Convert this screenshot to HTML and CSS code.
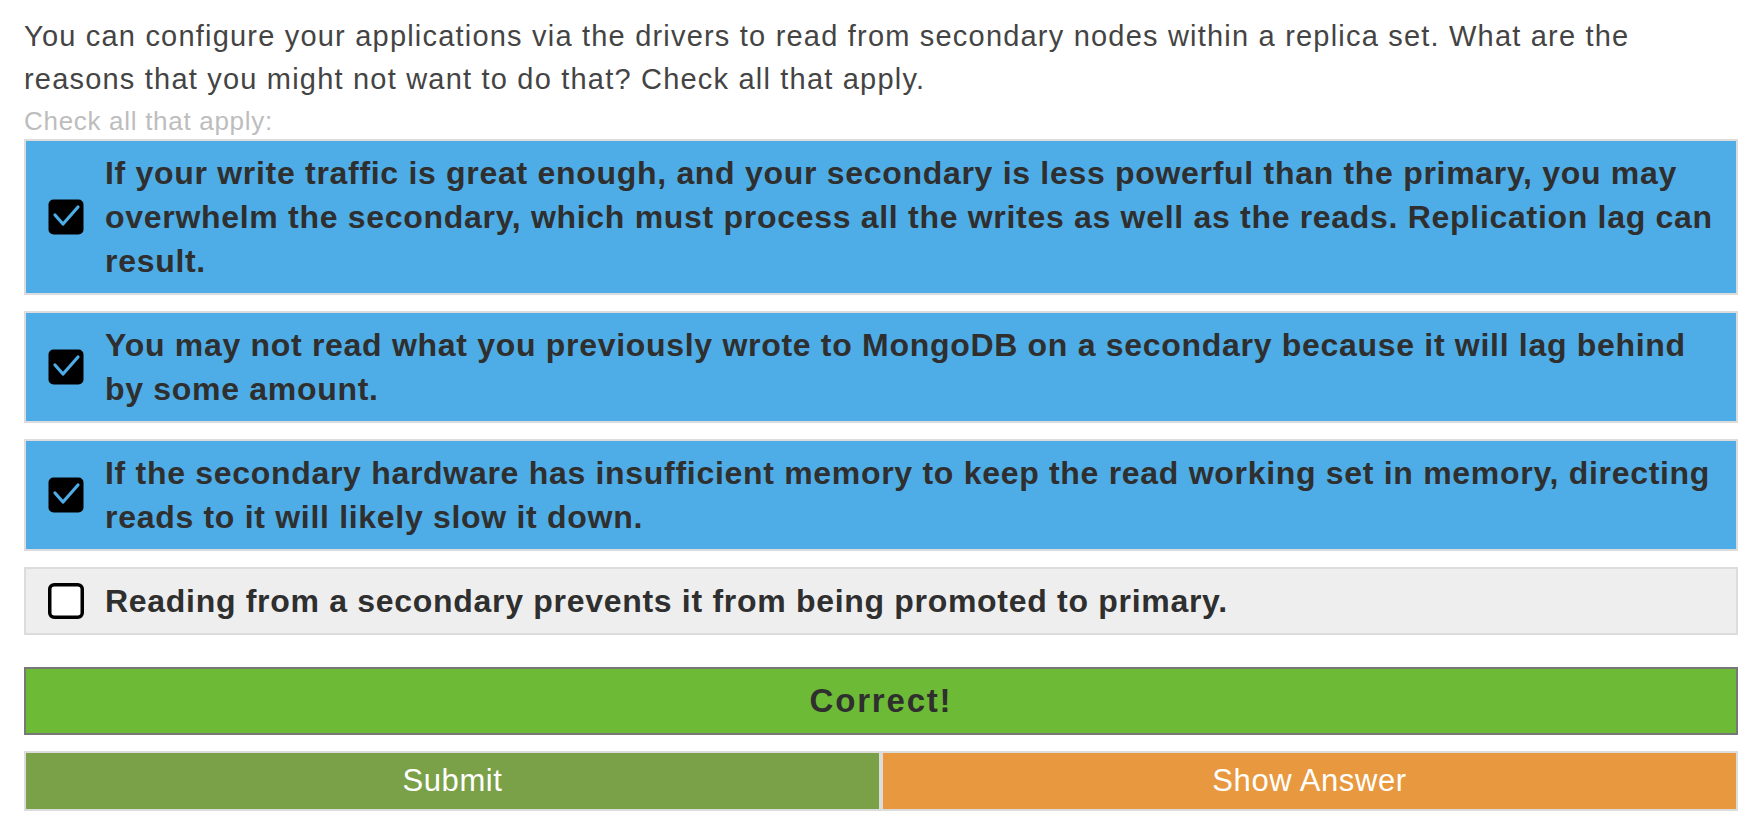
FILE: index.html
```html
<!DOCTYPE html>
<html>
<head>
<meta charset="utf-8">
<link rel="stylesheet" href="styles.css">
</head>
<body>
<div class="quiz">
  <p class="question">You can configure your applications via the drivers to read from secondary nodes within a replica set. What are the reasons that you might not want to do that? Check all that apply.</p>
  <div class="hint">Check all that apply:</div>
  <div class="options">
    <label class="option checked">
      <span class="box"><svg viewBox="0 0 36 36" width="36" height="36"><rect x="0.5" y="0.5" width="35" height="35" rx="5" fill="#000"/><polyline points="7,16 15,25 30,8" fill="none" stroke="#4eade6" stroke-width="3.2" stroke-linecap="round" stroke-linejoin="round"/></svg></span>
      <span class="text">If your write traffic is great enough, and your secondary is less powerful than the primary, you may overwhelm the secondary, which must process all the writes as well as the reads. Replication lag can result.</span>
    </label>
    <label class="option checked">
      <span class="box"><svg viewBox="0 0 36 36" width="36" height="36"><rect x="0.5" y="0.5" width="35" height="35" rx="5" fill="#000"/><polyline points="7,16 15,25 30,8" fill="none" stroke="#4eade6" stroke-width="3.2" stroke-linecap="round" stroke-linejoin="round"/></svg></span>
      <span class="text">You may not read what you previously wrote to MongoDB on a secondary because it will lag behind by some amount.</span>
    </label>
    <label class="option checked">
      <span class="box"><svg viewBox="0 0 36 36" width="36" height="36"><rect x="0.5" y="0.5" width="35" height="35" rx="5" fill="#000"/><polyline points="7,16 15,25 30,8" fill="none" stroke="#4eade6" stroke-width="3.2" stroke-linecap="round" stroke-linejoin="round"/></svg></span>
      <span class="text">If the secondary hardware has insufficient memory to keep the read working set in memory, directing reads to it will likely slow it down.</span>
    </label>
    <label class="option unchecked">
      <span class="box"><svg viewBox="0 0 36 36" width="36" height="36"><rect x="1.75" y="1.75" width="32.5" height="32.5" rx="4.5" fill="#fff" stroke="#000" stroke-width="3.5"/></svg></span>
      <span class="text">Reading from a secondary prevents it from being promoted to primary.</span>
    </label>
  </div>
  <div class="result">Correct!</div>
  <div class="actions">
    <button class="btn submit">Submit</button>
    <button class="btn answer">Show Answer</button>
  </div>
</div>
</body>
</html>
```
FILE: styles.css
```css
html, body {
  margin: 0;
  padding: 0;
  background: #fff;
}
.quiz {
  padding: 15px 16px 0 24px;
  font-family: "Liberation Sans", Arial, sans-serif;
  color: #333;
}
.question {
  margin: 0;
  font-size: 29px;
  letter-spacing: 1.2px;
  line-height: 43px;
  color: #444;
  padding-right: 20px;
}
.hint {
  margin-top: 5px;
  font-size: 26px;
  letter-spacing: 0.7px;
  line-height: 30px;
  color: #bdbdbd;
  margin-bottom: 3px;
}
.options {
  display: flex;
  flex-direction: column;
  gap: 16px;
}
.option {
  display: flex;
  align-items: center;
  border: 2px solid #dcdcdc;
  padding: 10px 8px 10px 22px;
  gap: 21px;
}
.option.checked {
  background: #4eade6;
}
.option.unchecked {
  background: #eeeeee;
}
.box {
  flex: 0 0 36px;
  width: 36px;
  height: 36px;
}
.box svg {
  display: block;
}
.text {
  font-size: 32px;
  letter-spacing: 0.7px;
  font-weight: bold;
  line-height: 44px;
  color: #2f2f2f;
}
.result {
  margin-top: 32px;
  border: 2px solid #777;
  background: #6dba36;
  height: 64px;
  display: flex;
  align-items: center;
  justify-content: center;
  font-size: 33px;
  font-weight: bold;
  letter-spacing: 1.8px;
  color: #2f2f2f;
}
.actions {
  margin-top: 16px;
  display: flex;
}
.btn {
  flex: 1 1 0;
  height: 60px;
  border: 2px solid #dcdcdc;
  font-family: "Liberation Sans", Arial, sans-serif;
  font-size: 31px;
  letter-spacing: 0.6px;
  color: #fff;
  padding: 0;
  margin: 0;
}
.btn.submit {
  background: #7aa048;
}
.btn.answer {
  background: #e8983e;
}
```
